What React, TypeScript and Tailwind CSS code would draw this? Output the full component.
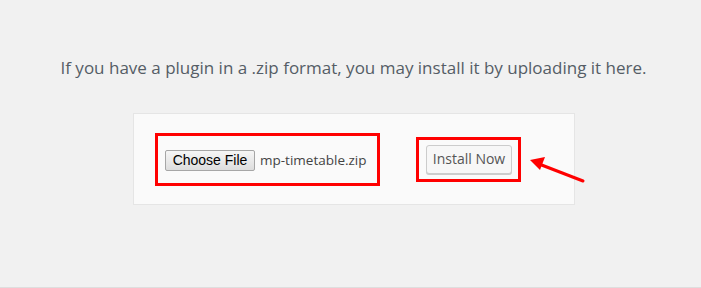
import React from 'react';

const Arrow: React.FC = () => (
  <svg className="absolute left-[525px] top-[152px]" width="64" height="36" viewBox="0 0 64 36">
    <line x1="58" y1="29" x2="14" y2="12" stroke="#ff0000" strokeWidth="3" strokeLinecap="round" />
    <polygon points="5,8 20,5 15,18" fill="#ff0000" />
  </svg>
);

export default function App() {
  return (
    <div className="relative h-[288px] w-[701px] overflow-hidden border-b border-[#dedede] bg-[#f1f1f1] font-['Open_Sans',sans-serif]">
      <p className="pl-[6px] pt-[56px] text-center text-[17px] leading-[24px] text-[#555d66]">
        If you have a plugin in a .zip format, you may install it by uploading it here.
      </p>

      <div className="ml-[133px] mt-[33px] flex h-[92px] w-[442px] items-center border border-[#e5e5e5] bg-[#fafafa] pl-[21px]">
        {/* file picker */}
        <div className="flex h-[53px] w-[225px] items-center whitespace-nowrap border-[3px] border-[#ff0000] pl-[7px] pt-[2px]">
          <button className="h-[21px] w-[90px] rounded-[2px] border border-[#a6a6a6] bg-gradient-to-b from-[#f6f6f6] to-[#dddddd] font-['Liberation_Sans',sans-serif] text-[14px] leading-[19px] text-black">
            Choose File
          </button>
          <span className="ml-[5px] text-[13.5px] text-[#444]">mp-timetable.zip</span>
        </div>

        {/* submit */}
        <div className="ml-[36px] flex h-[45px] w-[105px] items-center border-[3px] border-[#ff0000] pl-[7px]">
          <button className="h-[29px] w-[86px] rounded-[3px] border border-[#cccccc] bg-[#f7f7f7] text-[14px] leading-[26px] text-[#555] shadow-[0_1px_0_#cccccc]">
            Install Now
          </button>
        </div>
      </div>

      <Arrow />
    </div>
  );
}
